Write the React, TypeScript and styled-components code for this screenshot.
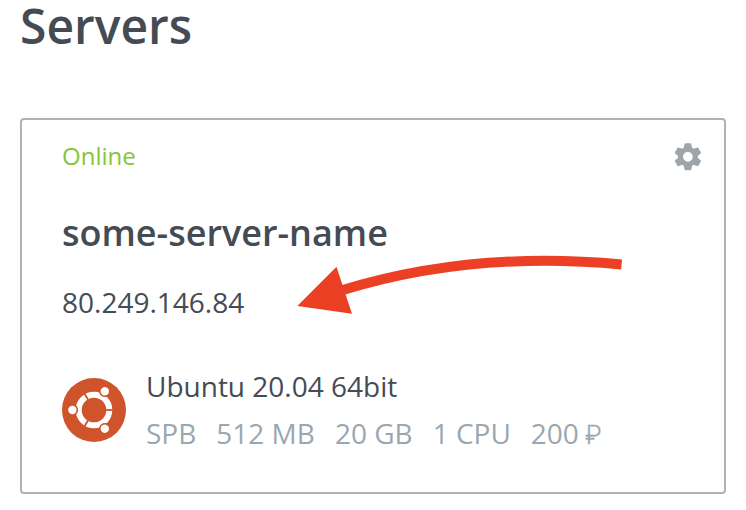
import React from "react";
import styled, { createGlobalStyle } from "styled-components";

const GlobalStyle = createGlobalStyle`
  body {
    margin: 0;
    background: #fff;
    color: #444b54;
    font-family: "Open Sans", sans-serif;
    overflow: hidden;
  }
`;

const Page = styled.main`
  padding: 0 20px;
`;

const Title = styled.h1`
  margin: 0 0 66px;
  font-size: 48px;
  font-weight: 600;
  line-height: 52px;
`;

const Card = styled.section`
  position: relative;
  box-sizing: border-box;
  height: 376px;
  padding: 20px 20px 0 40px;
  border: 2px solid #b1b1b1;
  border-radius: 4px;
`;

const CardHeader = styled.header`
  display: flex;
  align-items: flex-start;
  justify-content: space-between;
`;

const Status = styled.span`
  color: #84c63c;
  font-size: 24px;
  line-height: 32px;
`;

const SettingsButton = styled.button`
  display: flex;
  margin: 1px 0 -1px;
  padding: 0;
  border: 0;
  background: none;
  color: #9fa4a8;
`;

const ServerName = styled.h2`
  margin: 37px 0 25px;
  font-size: 36px;
  font-weight: 600;
  line-height: 48px;
`;

const Address = styled.div`
  font-size: 28px;
  line-height: 40px;
`;

const System = styled.div`
  display: flex;
  gap: 20px;
  margin-top: 44px;
`;

const Logo = styled.svg`
  flex: none;
  margin-top: 12px;
`;

const SystemName = styled.div`
  font-size: 28px;
  line-height: 40px;
`;

const Specs = styled.div`
  display: flex;
  gap: 20px;
  margin-top: 7px;
  color: #9aa7af;
  font-size: 28px;
  line-height: 40px;
  white-space: nowrap;
`;

const Ruble = styled.span`
  margin-left: -1px;
  font-family: Roboto, "Open Sans", sans-serif;
  font-size: 25px;
  font-weight: 300;
  line-height: 1;
  -webkit-text-stroke: 0.4px currentColor;
`;

const Arrow = styled.svg`
  position: absolute;
  top: 130px;
  left: 268px;
`;

const GearIcon = () => (
  <svg width="32" height="32" viewBox="-15.9 -15.8 32 32" fill="currentColor">
    <circle r="7.4" fill="none" stroke="currentColor" strokeWidth="5.1" />
    {[0, 60, 120, 180, 240, 300].map((angle) => (
      <path
        key={angle}
        transform={`rotate(${angle})`}
        d="M-4.4 -7.8L-3.4 -12.7Q-3.2 -13.5 -2.4 -13.5H2.4Q3.2 -13.5 3.4 -12.7L4.4 -7.8Z"
      />
    ))}
  </svg>
);

const UbuntuLogo = () => (
  <Logo width="64" height="64" viewBox="-32 -32 64 64">
    <circle r="32" fill="#d0542b" />
    <circle r="15.3" fill="none" stroke="#fff" strokeWidth="6" />
    {[0, 120, 240].map((angle) => (
      <g key={angle} transform={`rotate(${angle})`}>
        <path d="M11 0H20" stroke="#d0542b" strokeWidth="1.8" />
        <circle cx="-21.6" r="5" fill="#fff" stroke="#d0542b" strokeWidth="1.6" />
      </g>
    ))}
  </Logo>
);

const PointerArrow = () => (
  <Arrow width="350" height="70" viewBox="290 250 350 70">
    <path d="M342 290.3C430 263.2 520 254.8 621.6 264.5" fill="none" stroke="#ec4024" strokeWidth="10" />
    <path d="M297.3 306L336.5 266.7L352 313.8Z" fill="#ec4024" />
  </Arrow>
);

const specs = ["SPB", "512 MB", "20 GB", "1 CPU"];

export default function App() {
  return (
    <>
      <GlobalStyle />
      <Page>
        <Title>Servers</Title>
        <Card>
          <CardHeader>
            <Status>Online</Status>
            <SettingsButton aria-label="Settings">
              <GearIcon />
            </SettingsButton>
          </CardHeader>
          <ServerName>some-server-name</ServerName>
          <Address>80.249.146.84</Address>
          <System>
            <UbuntuLogo />
            <div>
              <SystemName>Ubuntu 20.04 64bit</SystemName>
              <Specs>
                {specs.map((spec) => (
                  <span key={spec}>{spec}</span>
                ))}
                <span>
                  200 <Ruble>₽</Ruble>
                </span>
              </Specs>
            </div>
          </System>
          <PointerArrow />
        </Card>
      </Page>
    </>
  );
}
